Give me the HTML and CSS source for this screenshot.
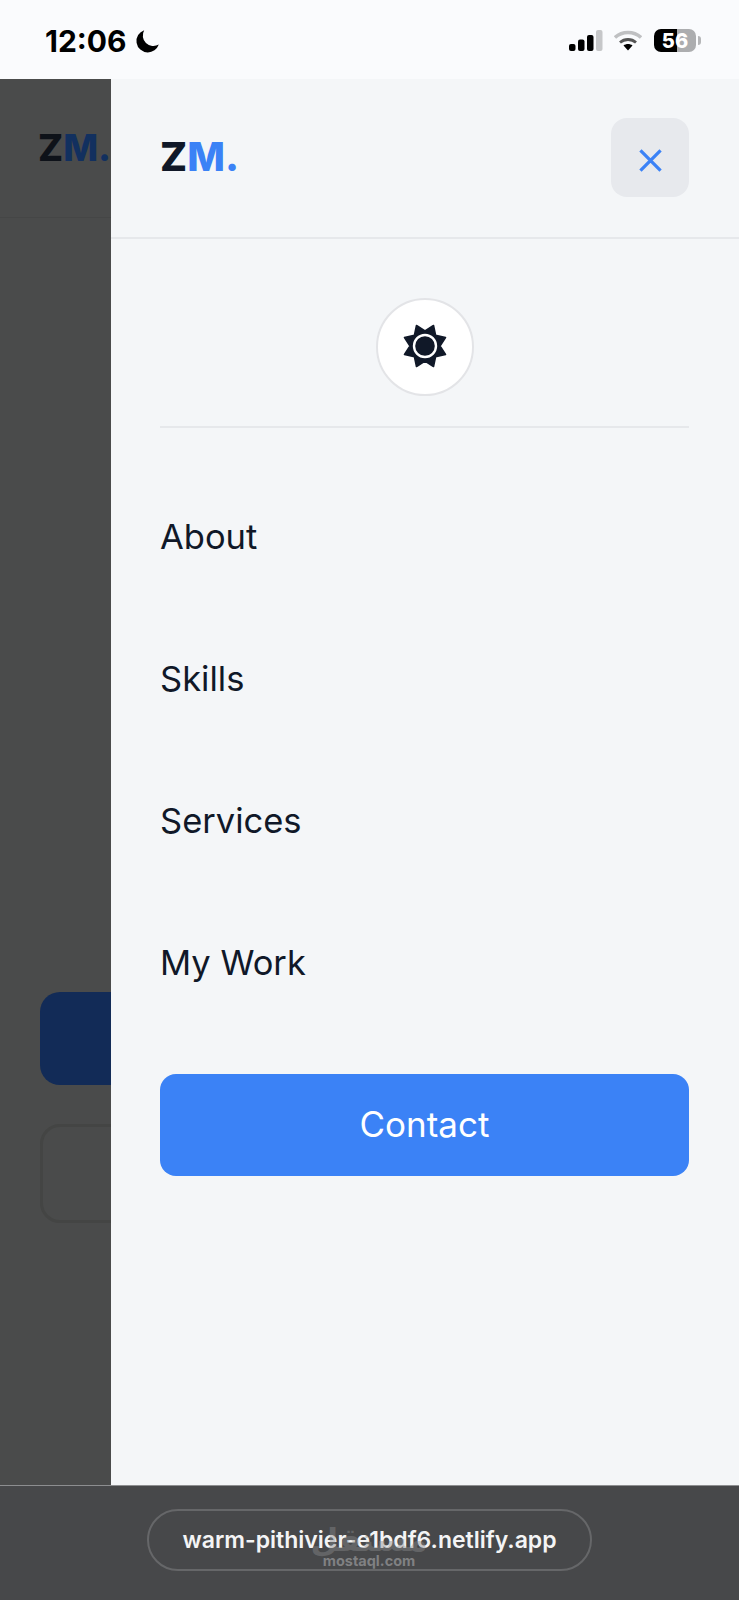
FILE: index.html
```html
<!DOCTYPE html>
<html lang="en">
<head>
<meta charset="utf-8">
<title>ZM. menu</title>
<link rel="stylesheet" href="styles.css">
</head>
<body>
<div class="status">
  <div class="status-left">
    <span class="time">12:06</span>
    <svg class="moon" viewBox="0 0 24 24"><path d="M9.2 1.2A11.4 11.4 0 0 0 12.6 23.4 11.6 11.6 0 0 0 23.8 15.6 10.6 10.6 0 0 1 9.2 1.2Z"/></svg>
  </div>
  <div class="status-right">
    <svg class="signal" viewBox="0 0 34 21">
      <rect x="0" y="14" width="6.5" height="7" rx="2" fill="#000"/>
      <rect x="9" y="9.5" width="6.5" height="11.5" rx="2" fill="#000"/>
      <rect x="18" y="5" width="6.5" height="16" rx="2" fill="#000"/>
      <rect x="27" y="0" width="6.5" height="21" rx="2" fill="#c6c7c9"/>
    </svg>
    <svg class="wifi" viewBox="0 0 28 21">
      <path d="M1 7.5C8.2 .8 19.8 .8 27 7.5" fill="none" stroke="#bfc0c2" stroke-width="3.4"/>
      <path d="M6 12.5C10.5 8.5 17.5 8.5 22 12.5" fill="none" stroke="#555" stroke-width="2.8"/>
      <path d="M9.5 15.6C12 13.6 16 13.6 18.5 15.6L14 20.5Z" fill="#000"/>
    </svg>
    <div class="battery">
      <div class="battery-body"><span class="battery-level">56</span></div>
      <span class="battery-tip"></span>
    </div>
  </div>
</div>

<div class="middle">
  <div class="backdrop">
    <div class="back-header"><span class="back-logo">Z<span class="back-logo-accent">M.</span></span></div>
    <div class="back-primary"></div>
    <div class="back-outline"></div>
  </div>
  <aside class="drawer">
    <header class="drawer-header">
      <span class="logo">Z<span class="logo-accent">M.</span></span>
      <button class="close" type="button" aria-label="Close">
        <svg class="close-icon" viewBox="0 0 24 24"><path d="M1.5 1.5 22.5 22.5M22.5 1.5 1.5 22.5"/></svg>
      </button>
    </header>
    <div class="drawer-body">
      <div class="theme-row">
        <button class="theme" type="button" aria-label="Theme">
          <svg class="sun" viewBox="-24 -24 48 48">
            <polygon class="sun-star" points="0,-15 8.5,-20.5 10.6,-10.6 20.5,-8.5 15,0 20.5,8.5 10.6,10.6 8.5,20.5 0,15 -8.5,20.5 -10.6,10.6 -20.5,8.5 -15,0 -20.5,-8.5 -10.6,-10.6 -8.5,-20.5"/>
            <circle class="sun-ring" r="11"/>
          </svg>
        </button>
      </div>
      <nav class="nav">
        <a class="nav-link">About</a>
        <a class="nav-link">Skills</a>
        <a class="nav-link">Services</a>
        <a class="nav-link">My Work</a>
      </nav>
      <a class="contact">Contact</a>
    </div>
  </aside>
</div>

<div class="url-bar">
  <div class="url-pill">warm-pithivier-e1bdf6.netlify.app</div>
  <div class="watermark">
    <span class="watermark-ar">مستقل</span>
    <span class="watermark-en">mostaql.com</span>
  </div>
</div>
</body>
</html>
```
FILE: styles.css
```css
* { box-sizing: border-box; }
html, body { margin: 0; padding: 0; }
body {
  width: 739px;
  height: 1600px;
  display: flex;
  flex-direction: column;
  overflow: hidden;
  font-family: Inter, "Liberation Sans", sans-serif;
  background: #47484a;
}

/* status bar */
.status {
  height: 79px;
  flex: none;
  background: #fafbfd;
  display: flex;
  justify-content: space-between;
  align-items: center;
  padding: 2px 38px 0 45px;
}
.status-left { display: flex; align-items: center; gap: 8px; }
.time { font-size: 30px; font-weight: 700; color: #000; line-height: 1; }
.moon { width: 24px; height: 24px; fill: #000; }
.status-right { display: flex; align-items: center; }
.signal { width: 34px; height: 21px; margin-right: 11px; }
.wifi { width: 28px; height: 21px; margin-right: 12px; }
.battery { display: flex; align-items: center; gap: 2px; }
.battery-body {
  width: 42px;
  height: 23px;
  border-radius: 7px;
  background: linear-gradient(90deg, #000 0 55%, #acadaf 55% 100%);
  display: flex;
  align-items: center;
  justify-content: center;
}
.battery-level { color: #fff; font-size: 20px; font-weight: 800; line-height: 1; }
.battery-tip { width: 3px; height: 9px; border-radius: 0 3px 3px 0; background: #b5b6b8; }

/* middle */
.middle { height: 1406px; flex: none; display: flex; }
.backdrop {
  width: 111px;
  flex: none;
  background: #4a4b4b;
  overflow: hidden;
}
.back-header {
  height: 139px;
  border-bottom: 1px solid #454646;
  padding: 0 0 2px 38px;
  display: flex;
  align-items: center;
}
.back-logo { font-size: 37px; font-weight: 800; color: #0e1219; line-height: 1; }
.back-logo-accent { color: #12305f; }
.back-primary {
  width: 200px;
  height: 93px;
  margin: 774px 0 0 40px;
  background: #122b57;
  border-radius: 20px;
}
.back-outline {
  width: 200px;
  height: 99px;
  margin: 39px 0 0 40px;
  border: 3px solid #444544;
  border-radius: 20px;
}

.drawer {
  flex: 1;
  background: #f4f6f8;
  display: flex;
  flex-direction: column;
}
.drawer-header {
  height: 160px;
  flex: none;
  border-bottom: 2px solid #e6e8eb;
  padding: 0 50px 2px 49px;
  display: flex;
  align-items: center;
  justify-content: space-between;
}
.logo { font-size: 40px; font-weight: 800; color: #101828; line-height: 1; }
.logo-accent { color: #3b82f6; }
.close {
  width: 78px;
  height: 79px;
  padding: 7px 0 0;
  border: 0;
  border-radius: 16px;
  background: #e7e9ed;
  display: flex;
  align-items: center;
  justify-content: center;
}
.close-icon { width: 23px; height: 23px; fill: none; stroke: #3b82f6; stroke-width: 3.4; }

.drawer-body { flex: 1; padding: 0 50px 0 49px; }
.theme-row {
  height: 189px;
  padding-top: 59px;
  border-bottom: 2px solid #e6e8eb;
  display: flex;
  justify-content: center;
  align-items: flex-start;
}
.theme {
  width: 98px;
  height: 98px;
  padding: 0 0 2px;
  border: 2px solid #e3e4e7;
  border-radius: 50%;
  background: #fff;
  display: flex;
  align-items: center;
  justify-content: center;
}
.sun { width: 48px; height: 48px; }
.sun-star { fill: #101828; stroke: #101828; stroke-width: 1.6; stroke-linejoin: round; }
.sun-ring { fill: #101828; stroke: #fff; stroke-width: 2.4; }

.nav { padding-top: 37px; display: flex; flex-direction: column; }
.nav-link {
  height: 142px;
  display: flex;
  align-items: center;
  font-size: 34.5px;
  font-weight: 400;
  color: #101828;
}
.contact {
  height: 102px;
  margin-top: 41px;
  padding-bottom: 2px;
  background: #3b82f6;
  border-radius: 16px;
  color: #fff;
  font-size: 35px;
  display: flex;
  align-items: center;
  justify-content: center;
}

/* bottom url bar */
.url-bar {
  position: relative;
  flex: 1;
  background: #47484a;
  padding-top: 23px;
  display: flex;
  justify-content: center;
  border-top: 1px solid #8d8e90;
}
.url-pill {
  width: 445px;
  height: 62px;
  border: 2px solid #666769;
  border-radius: 31px;
  color: #f4f4f5;
  font-size: 23px;
  font-weight: 600;
  display: flex;
  align-items: center;
  justify-content: center;
}
.watermark {
  position: absolute;
  left: 324px;
  top: 38px;
  width: 90px;
  display: flex;
  flex-direction: column;
  align-items: center;
  color: #8a8b8d;
  line-height: 1;
  opacity: 0.85;
}
.watermark-ar { font-family: "DejaVu Sans", sans-serif; font-size: 32px; font-weight: 700; opacity: .5; height: 30px; }
.watermark-en { font-size: 14.5px; font-weight: 700; }
```
